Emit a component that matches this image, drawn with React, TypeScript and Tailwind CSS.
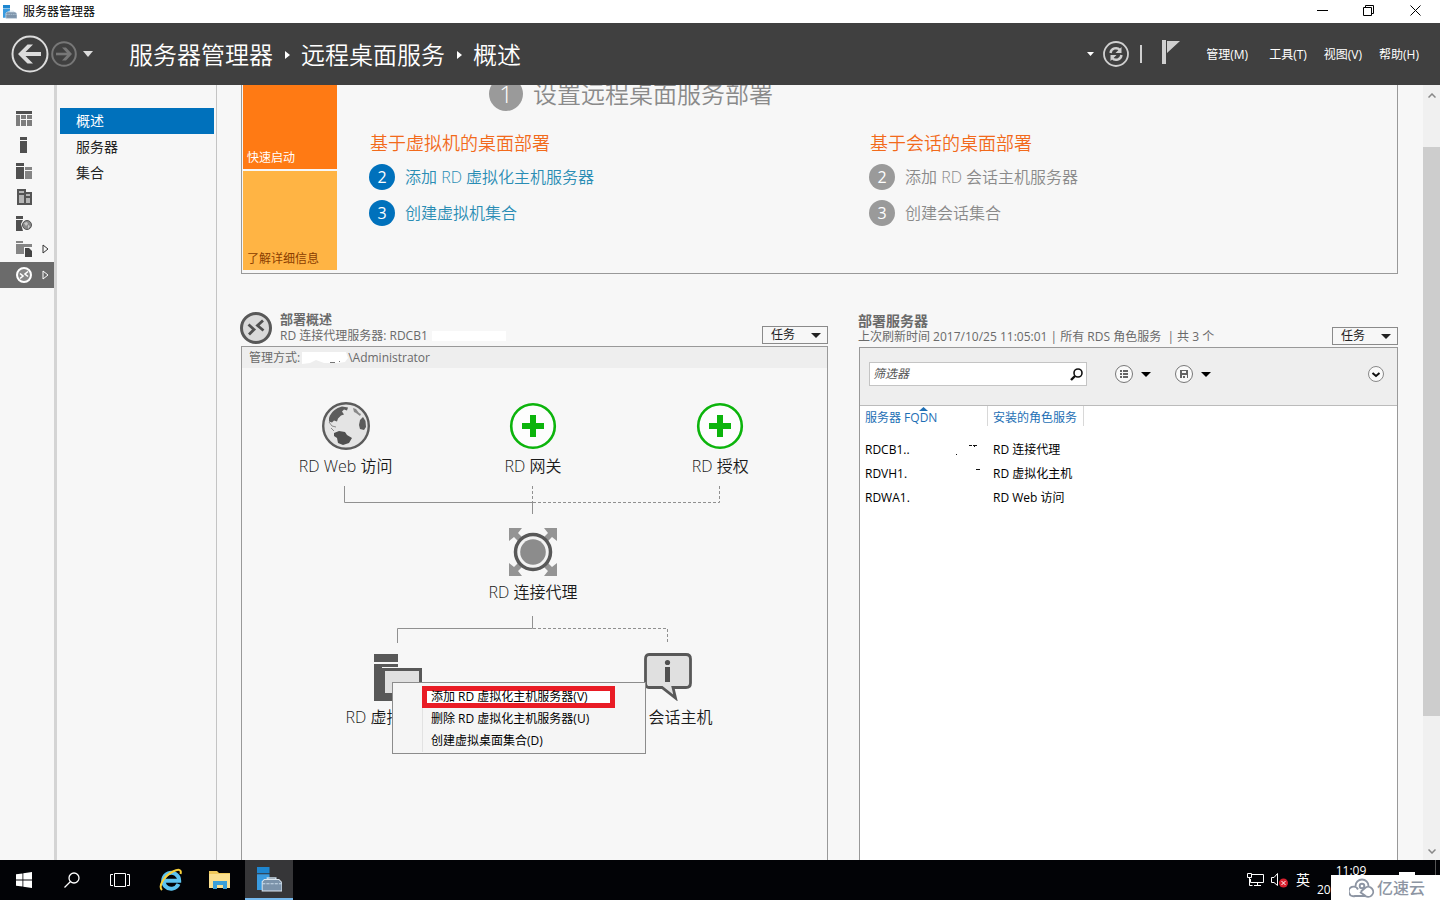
import type { ReactNode } from "react";
import clsx from "clsx";

const NAV = ["概述", "服务器", "集合"];

const MENUS = ["管理(M)", "工具(T)", "视图(V)", "帮助(H)"];

const CONTEXT_ITEMS = ["添加 RD 虚拟化主机服务器(V)", "删除 RD 虚拟化主机服务器(U)", "创建虚拟桌面集合(D)"];

const SERVERS = [
  { fqdn: "RDCB1..", role: "RD 连接代理", marks: "M15 12h1v1h-1zM28 3h3v1h-3zM32 3h4v1h-4zM33 4h1v1h-1z" },
  { fqdn: "RDVH1.", role: "RD 虚拟化主机", marks: "M35 3h4v1h-4z" },
  { fqdn: "RDWA1.", role: "RD Web 访问", marks: "" }
];

function Caret({ className = "h-[5px] w-[10px]" }: { className?: string }) {
  return (
    <svg viewBox="0 0 10 6" preserveAspectRatio="none" className={clsx("shrink-0 fill-current", className)}>
      <path d="M0 0h10L5 6z" />
    </svg>
  );
}

function ServerManagerIcon({ className }: { className?: string }) {
  return (
    <svg viewBox="0 0 24 24" className={className}>
      <path d="M0 0h12v6H0z" fill="#1e86d0" />
      <path d="M0 7h12v4L5 14v8H0z" fill="#3a9be0" />
      <path d="M10 12.500v-2h8v2" fill="none" stroke="#c9dcea" strokeWidth="1.500" />
      <path d="M5 14l2-2h14l3 3v8H5z" fill="#7c93aa" stroke="#dbe6ef" />
      <path d="M5 16h19" stroke="#c9dcea" strokeDasharray="3 1" />
    </svg>
  );
}

function TitleBar() {
  return (
    <div className="flex h-[23px] shrink-0 items-center bg-white pl-[3px] text-black">
      <ServerManagerIcon className="h-[14px] w-[14px]" />
      <span className="ml-[6px] text-[12px] leading-[20px]">服务器管理器</span>
      <div className="mr-px ml-auto flex h-full pb-[2px]">
        <button aria-label="最小化" className="grid w-[46px] place-items-center">
          <svg viewBox="0 0 11 11" className="h-[11px] w-[11px]" stroke="currentColor"><path d="M0 5.500h11" /></svg>
        </button>
        <button aria-label="还原" className="grid w-[46px] place-items-center">
          <svg viewBox="0 0 11 11" className="h-[11px] w-[11px]" fill="none" stroke="currentColor">
            <path d="M.5 2.500h8v8h-8zM2.500 2.500v-2h8v8h-2" />
          </svg>
        </button>
        <button aria-label="关闭" className="grid w-[48px] place-items-center">
          <svg viewBox="0 0 11 11" className="h-[11px] w-[11px]" stroke="currentColor"><path d="M.5.5l10 10M10.500.5l-10 10" /></svg>
        </button>
      </div>
    </div>
  );
}

function Header() {
  return (
    <header className="flex h-[62px] shrink-0 items-center bg-[#404040] pr-[21px] pl-[11px] text-white">
      <button aria-label="后退">
        <svg viewBox="0 0 38 38" className="h-[38px] w-[38px]" fill="none" stroke="#dcdcdc">
          <circle cx="19" cy="19" r="17.500" strokeWidth="2" />
          <path d="M9 19h21" strokeWidth="4" />
          <path d="M22 9.500h-5.500L7 19l9.500 9.500H22L12.500 19z" fill="#dcdcdc" stroke="none" />
        </svg>
      </button>
      <button aria-label="前进" className="ml-[2px]">
        <svg viewBox="0 0 26 26" className="h-[26px] w-[26px]" fill="none" stroke="#777">
          <circle cx="13" cy="13" r="11.800" strokeWidth="2" />
          <path d="M5 13h14" strokeWidth="2.600" />
          <path d="M11 6.500h4L21 13l-6 6.500h-4L17 13z" fill="#777" stroke="none" />
        </svg>
      </button>
      <Caret className="ml-[6px] h-[6px] w-[10px] text-[#dcdcdc]" />
      <h1 className="ml-[36px] flex items-center pt-[2px] text-[24px] leading-[32px] font-[350]">
        服务器管理器
        <svg viewBox="0 0 5 8" className="mr-[11px] ml-[12px] h-[8px] w-[5px] fill-white"><path d="M0 0l5 4-5 4z" /></svg>
        远程桌面服务
        <svg viewBox="0 0 5 8" className="mr-[11px] ml-[12px] h-[8px] w-[5px] fill-white"><path d="M0 0l5 4-5 4z" /></svg>
        概述
      </h1>
      <Caret className="ml-auto h-[4px] w-[7px]" />
      <button aria-label="刷新" className="ml-[9px]">
        <svg viewBox="0 0 26 26" className="h-[26px] w-[26px]" fill="none" stroke="#d0d0d0">
          <circle cx="13" cy="13" r="12" strokeWidth="1.800" />
          <path d="M7.500 12a5.500 5.500 0 0 1 9.500-3M18.500 14a5.500 5.500 0 0 1-9.500 3" strokeWidth="2.400" />
          <path d="M18.500 6v6h-6zM7.500 20v-6h6z" fill="#d0d0d0" stroke="none" />
        </svg>
      </button>
      <span className="ml-[11px] h-[18px] w-[2px] bg-[#cfcfcf]" />
      <button aria-label="通知" className="ml-[20px]">
        <svg viewBox="0 0 18 24" className="mb-[4px] h-[24px] w-[18px] fill-[#d0d0d0]">
          <path d="M0 0h4v24H0zM5 1h13L5 13z" />
        </svg>
      </button>
      <nav className="ml-[26px] flex gap-[17px] pt-[2px] text-[12px] leading-[20px]">
        {MENUS.map((m) => (
          <button key={m} className="first:mr-[4px]">{m}</button>
        ))}
      </nav>
    </header>
  );
}

const RAIL: { label: string; icon: ReactNode; arrow?: boolean }[] = [
  {
    label: "仪表板",
    icon: (
      <>
        <path d="M0 0h16v3H0z" fill="#505050" />
        <path d="M0 4h4v11H0zM5 4h5v4H5zM11 4h5v4h-5zM5 9h5v6H5zM11 9h5v6h-5z" fill="#7d7d7d" />
      </>
    )
  },
  { label: "本地服务器", icon: <path d="M4 0h7v3H4zM4 4h7v12H4z" fill="#505050" /> },
  {
    label: "所有服务器",
    icon: (
      <>
        <path d="M0 0h8v3H0zM0 4h8v12H0z" fill="#505050" />
        <path d="M9 4h7v3H9zM9 8h7v8H9z" fill="#858585" />
      </>
    )
  },
  {
    label: "AD DS",
    icon: (
      <>
        <path d="M1 0h9v3h6v13H1z" fill="#555" />
        <path d="M3 2h5v2H3zM3 6h5v8H3zM10 5h4v2h-4zM10 9h4v5h-4z" fill="#b5b5b5" />
      </>
    )
  },
  {
    label: "DNS",
    icon: (
      <>
        <path d="M0 1h7v3H0zM0 5h7l-2 4 2 7H0z" fill="#505050" />
        <circle cx="11" cy="10" r="4.500" fill="#8a8a8a" stroke="#555" />
        <path d="M8 8l3-1 1 2-2 2zM12 10l2 1-2 3z" fill="#c8c8c8" />
      </>
    )
  },
  {
    label: "文件和存储服务",
    arrow: true,
    icon: (
      <>
        <path d="M0 0h7v2H0zM0 3h16v3H8v7H0z" fill="#858585" />
        <path d="M9 7h4l3 3v6H9z" fill="#444" />
      </>
    )
  },
  {
    label: "远程桌面服务",
    arrow: true,
    icon: (
      <>
        <circle cx="8" cy="8" r="7" fill="#888" stroke="#fff" strokeWidth="2" />
        <path d="M4 6.500l3 2.500-3 2.500M12 4.500L9 7l3 2.500" fill="none" stroke="#fff" strokeWidth="1.600" />
      </>
    )
  }
];

function Rail() {
  return (
    <nav className="w-[57px] shrink-0 border-r-[3px] border-[#d4d4d4] pt-[21px]">
      {RAIL.map((r, i) => {
        const active = i === RAIL.length - 1;
        return (
          <button
            key={r.label}
            aria-label={r.label}
            className={clsx("flex h-[26px] w-full items-center pl-[16px]", active ? "bg-[#6b6b6b] text-white" : "text-[#333]")}
          >
            <svg viewBox="0 0 16 16" className="h-[16px] w-[16px]">{r.icon}</svg>
            {r.arrow && (
              <svg viewBox="0 0 7 10" className="ml-[10px] h-[10px] w-[7px]" fill="none" stroke="currentColor">
                <path d="M1 1l5 4-5 4z" />
              </svg>
            )}
          </button>
        );
      })}
    </nav>
  );
}

function SideNav() {
  return (
    <nav className="w-[160px] shrink-0 border-r border-[#c4c4c4] pt-[23px] pr-[2px] pl-[3px]">
      {NAV.map((n, i) => (
        <a
          key={n}
          href="#"
          className={clsx("block h-[26px] pl-[16px] text-[14px] leading-[26px]", i === 0 ? "bg-[#0071bc] text-white" : "text-[#222]")}
        >
          {n}
        </a>
      ))}
    </nav>
  );
}

function Steps({ title, steps, muted }: { title: string; steps: string[]; muted?: boolean }) {
  return (
    <section>
      <h3 className="pl-px text-[18px] leading-[24px] font-[350] text-[#f26a1b]">{title}</h3>
      <ol className="mt-[9px] space-y-[10px]">
        {steps.map((s, i) => (
          <li key={s} className="flex items-center gap-[10px]">
            <span
              className={clsx(
                "grid h-[26px] w-[26px] place-items-center rounded-full text-[16px] leading-[24px] text-white",
                muted ? "bg-[#9a9a9a]" : "bg-[#0071bc]"
              )}
            >
              {i + 2}
            </span>
            <a href="#" className={clsx("text-[16px] leading-[24px] font-[350]", muted ? "text-[#8a8a8a]" : "text-[#2a8db4]")}>
              {s}
            </a>
          </li>
        ))}
      </ol>
    </section>
  );
}

function QuickStart() {
  return (
    <section className="-mt-[24px] flex shrink-0 border-x border-b border-[#999] pb-[3px] pl-px">
      <div className="flex w-[94px] shrink-0 flex-col gap-[2px] text-[12px] leading-[20px]">
        <button className="flex h-[108px] items-end bg-[#ff7a14] pb-px pl-[4px] text-white">快速启动</button>
        <button className="flex h-[99px] items-end bg-[#ffb444] pb-px pl-[4px] text-[#8a3d00]">了解详细信息</button>
      </div>
      <div className="flex-1 pt-[16px]">
        <h2 className="flex items-center gap-[10px] pl-[152px] text-[24px] leading-[34px] font-[350] text-[#8a8a8a]">
          <span className="grid h-[34px] w-[34px] place-items-center rounded-full bg-[#9a9a9a] text-white">1</span>
          设置远程桌面服务部署
        </h2>
        <div className="mt-[20px] grid grid-cols-2 pr-[28px] pl-[32px]">
          <Steps title="基于虚拟机的桌面部署" steps={["添加 RD 虚拟化主机服务器", "创建虚拟机集合"]} />
          <Steps title="基于会话的桌面部署" steps={["添加 RD 会话主机服务器", "创建会话集合"]} muted />
        </div>
      </div>
    </section>
  );
}

function TaskButton() {
  return (
    <button className="flex h-[18px] w-[66px] items-center justify-between border border-[#8a8a8a] pr-[6px] pl-[8px] text-[12px] leading-[16px] text-[#222]">
      任务
      <Caret />
    </button>
  );
}

function Node({ label, children }: { label: string; children: ReactNode }) {
  return (
    <div className="flex flex-col items-center">
      <svg viewBox="0 0 48 48" className="h-[48px] w-[48px]">{children}</svg>
      <span className="mt-[4px] text-[16px] leading-[24px] font-[350] whitespace-nowrap text-[#1a1a1a]">{label}</span>
    </div>
  );
}

function PlusMark() {
  return (
    <>
      <circle cx="24" cy="24" r="21.800" fill="#fdfdfd" stroke="#0cb40c" strokeWidth="2.600" />
      <path d="M21 13h6v8h8v6h-8v8h-6v-8h-8v-6h8z" fill="#0cb40c" />
    </>
  );
}

function ContextMenu() {
  return (
    <ul
      role="menu"
      className="absolute top-[29px] left-[129px] z-10 w-[254px] border border-[#8c8c8c] bg-[#f5f5f5] pt-[3px] pb-px pl-[29px] text-[12px] leading-[20px] text-black"
    >
      {CONTEXT_ITEMS.map((item, i) => (
        <li key={item} role="none" className={clsx("h-[22px] border-l", i === 0 ? "border-transparent" : "border-[#e2e2e2]")}>
          <button role="menuitem" className="relative block h-full w-full pl-[8px] text-left">
            {i === 0 && <span className="absolute top-0 -left-px h-[22px] w-[193px] border-[5px] border-[#e91c25] bg-white" />}
            <span className="relative">{item}</span>
          </button>
        </li>
      ))}
    </ul>
  );
}

function Deployment() {
  return (
    <section className="flex min-h-0 flex-col">
      <header className="flex h-[34px] shrink-0 items-end">
        <svg viewBox="0 0 32 32" className="-ml-px mb-[2px] h-[32px] w-[32px]">
          <circle cx="16" cy="16" r="14.500" fill="#d9d9d9" stroke="#585858" strokeWidth="3" />
          <path d="M8.500 12.500l5.500 5-5 5M23 8.500l-5.500 5 6 5" fill="none" stroke="#505050" strokeWidth="2.800" />
        </svg>
        <div className="mb-[2px] ml-[8px] text-[#6a6a6a]">
          <h2 className="text-[13px] leading-[15px] font-bold">部署概述</h2>
          <p className="flex items-center text-[12px] leading-[17px]">
            RD 连接代理服务器: RDCB1
            <span className="ml-[4px] h-[10px] w-[74px] bg-white" />
          </p>
        </div>
        <div className="mb-[2px] ml-auto"><TaskButton /></div>
      </header>
      <div className="flex-1 overflow-hidden border-x border-t border-[#999]">
        <p className="flex h-[21px] items-center bg-[#eee] pl-[7px] text-[12px] leading-[20px] text-[#6a6a6a]">
          管理方式:
          <svg viewBox="0 0 48 14" className="h-[14px] w-[48px]">
            <path d="M2 1h44l2 6-3 4-7 1H24l-8-3-6 3-8 1z" fill="#fff" />
            <path d="M30 11h5v1h-5zM39 10h1v1h-1z" fill="#777" />
          </svg>
          \Administrator
        </p>
        <div className="mt-[34px] pr-[13px] pl-[10px]">
          <div className="mx-auto w-[562px]">
            <div className="grid grid-cols-3">
              <Node label="RD Web 访问">
                <circle cx="24" cy="24" r="22.800" fill="#e4e4e4" stroke="#5c5c5c" strokeWidth="2.400" />
                <path d="M7 16C9 10 14 6 20 4.500l6 1-1 3-3-1-2 2 2 3-3 1-3 3-1 3-3-1-2 2-3-1z" fill="#5c5c5c" />
                <path d="M7 20l3 4 4 1M9 26l3 3" fill="none" stroke="#8a8a8a" />
                <path d="M12 31l5-2 6 1 2 3 5 3-3 5-6 2-5-2-1-5-3-2z" fill="#4f4f4f" />
                <path d="M38 18l3-3 2.500 4 .5 6-2 3-4-1-1-4z" fill="#5c5c5c" />
                <path d="M31 6l3 1 3 4 2 1-1 2-4-3-2-1z" fill="#888" />
              </Node>
              <Node label="RD 网关"><PlusMark /></Node>
              <Node label="RD 授权"><PlusMark /></Node>
            </div>
            <svg viewBox="0 0 562 28" className="mt-[8px] h-[28px] w-full" fill="none" stroke="#909090">
              <path d="M92.500 0v16.500h188M280.500 16v12" />
              <path d="M280.500 0v16M281 16.500h186.500V0" strokeDasharray="3 2" />
            </svg>
            <div className="mt-[14px]">
              <Node label="RD 连接代理">
                <path d="M0 0h13l-4 5 6 6-4 4-6-6-5 4zM48 0H35l4 5-6 6 4 4 6-6 5 4zM0 48h13l-4-5 6-6-4-4-6 6-5-4zM48 48H35l4-5-6-6 4-4 6 6 5-4z" fill="#949494" />
                <circle cx="24" cy="24" r="17.500" fill="#f2f2f2" stroke="#585858" strokeWidth="3.500" />
                <circle cx="24" cy="24" r="12.800" fill="#8c8c8c" />
              </Node>
            </div>
            <svg viewBox="0 0 562 27" className="mt-[12px] h-[27px] w-full" fill="none" stroke="#909090">
              <path d="M280.500 0v12.500h-135V27" />
              <path d="M281 12.500h134.500V27" strokeDasharray="3 2" />
            </svg>
            <div className="relative mx-auto mt-[10px] grid w-[540px] grid-cols-2">
              <Node label="RD 虚拟化主机">
                <path d="M0 1h24v8H0zM0 11h24v3H8v27h16v7H0z" fill="#585858" />
                <path d="M9.500 16.500h37v25h-37z" fill="#e0e0e0" stroke="#585858" strokeWidth="3" />
              </Node>
              <Node label="RD 会话主机">
                <path d="M5 1.500h37q4.500 0 4.500 4.500v24q0 4.500-4.500 4.500H29L31.500 45 18 34.500H5Q1.500 34.500 1.500 30V6q0-4.500 3.500-4.500z" fill="#e0e0e0" stroke="#585858" strokeWidth="2.800" />
                <circle cx="23.500" cy="9.500" r="2.600" fill="#505050" />
                <path d="M21 14h5v15h-5z" fill="#505050" />
              </Node>
              <ContextMenu />
            </div>
          </div>
        </div>
      </div>
    </section>
  );
}

function Servers() {
  return (
    <section className="flex min-h-0 flex-col">
      <header className="flex h-[35px] shrink-0 items-end">
        <div className="-ml-px mb-[2px] text-[#6a6a6a]">
          <h2 className="text-[14px] leading-[15px] font-bold">部署服务器</h2>
          <p className="text-[12px] leading-[17px] whitespace-pre">上次刷新时间 2017/10/25 11:05:01 | 所有 RDS 角色服务  | 共 3 个</p>
        </div>
        <div className="mb-[2px] ml-auto"><TaskButton /></div>
      </header>
      <div className="flex-1 overflow-hidden border-x border-t border-[#999] bg-white">
        <div className="flex h-[58px] items-center border-b border-[#bbb] bg-[#eee] pr-[13px] pb-[5px] pl-[9px]">
          <label className="flex h-[24px] w-[218px] items-center border border-[#c4c4c4] bg-white pr-[3px] pl-[3px]">
            <input
              aria-label="筛选器"
              placeholder="筛选器"
              className="min-w-0 flex-1 text-[12px] leading-[20px] text-[#333] italic outline-none placeholder:text-[#555]"
            />
            <svg viewBox="0 0 13 13" className="h-[13px] w-[13px]" fill="none" stroke="#111">
              <circle cx="8" cy="5" r="4" strokeWidth="1.600" />
              <path d="M5 8l-4 4" strokeWidth="2.400" />
            </svg>
          </label>
          <button aria-label="查看方式" className="ml-[28px] flex items-center gap-[8px]">
            <svg viewBox="0 0 18 18" className="h-[18px] w-[18px]">
              <circle cx="9" cy="9" r="8.500" fill="#fafafa" stroke="#777" />
              <path d="M5 5h2v2H5zM5 8h2v2H5zM5 11h2v2H5zM8 5h5v2H8zM8 8h5v2H8zM8 11h5v2H8z" fill="#666" />
            </svg>
            <Caret />
          </button>
          <button aria-label="保存查询" className="ml-[24px] flex items-center gap-[8px]">
            <svg viewBox="0 0 18 18" className="h-[18px] w-[18px]">
              <circle cx="9" cy="9" r="8.500" fill="#fafafa" stroke="#777" />
              <path d="M5 5h8v8h-1v-3H7v3H5zM7 6v2h4V6z" fill="#666" fillRule="evenodd" />
              <path d="M8 11h2v2H8z" fill="#666" />
            </svg>
            <Caret />
          </button>
          <button aria-label="展开" className="ml-auto">
            <svg viewBox="0 0 16 16" className="h-[16px] w-[16px]" fill="#fafafa">
              <circle cx="8" cy="8" r="7.500" stroke="#888" />
              <path d="M4.500 7L8 10l3.500-3" fill="none" stroke="#111" strokeWidth="2" />
            </svg>
          </button>
        </div>
        <table className="w-full table-fixed text-left text-[12px] leading-[20px] text-black">
          <thead>
            <tr className="h-[32px] align-top text-[#1e6fb5]">
              <th className="w-[128px] font-normal">
                <div className="relative h-[20px] border-r border-[#d8d8d8] pl-[5px] leading-[24px]">
                  服务器 FQDN
                  <Caret className="absolute top-px left-[59px] h-[4px] w-[9px] rotate-180" />
                </div>
              </th>
              <th className="w-[96px] font-normal">
                <div className="h-[20px] border-r border-[#d8d8d8] pl-[5px] leading-[24px]">安装的角色服务</div>
              </th>
              <th />
            </tr>
          </thead>
          <tbody>
            {SERVERS.map((s) => (
              <tr key={s.fqdn} className="h-[24px]">
                <td className="pl-[5px]">
                  <div className="flex items-center justify-between pr-[7px]">
                    {s.fqdn}
                    <svg viewBox="0 0 40 16" className="h-[16px] w-[40px]"><path d={s.marks} fill="#111" /></svg>
                  </div>
                </td>
                <td className="pl-[5px] whitespace-nowrap">{s.role}</td>
                <td />
              </tr>
            ))}
          </tbody>
        </table>
      </div>
    </section>
  );
}

function ScrollBar() {
  return (
    <div className="flex w-[17px] shrink-0 flex-col bg-[#f0f0f0]">
      <button aria-label="向上滚动" className="grid h-[20px] shrink-0 place-items-center">
        <svg viewBox="0 0 8 5" className="h-[5px] w-[8px]" fill="none" stroke="#888" strokeWidth="1.500"><path d="M.5 4.500L4 1l3.500 3.500" /></svg>
      </button>
      <div className="flex-1 pt-[42px]">
        <div className="h-[569px] bg-[#cdcdcd]" />
      </div>
      <button aria-label="向下滚动" className="grid h-[17px] shrink-0 place-items-center">
        <svg viewBox="0 0 8 5" className="h-[5px] w-[8px]" fill="none" stroke="#888" strokeWidth="1.500"><path d="M.5.5L4 4 7.500.5" /></svg>
      </button>
    </div>
  );
}

function TaskBar() {
  return (
    <footer className="relative flex h-[40px] shrink-0 bg-[#020306] text-white">
      <button aria-label="开始" className="grid w-[48px] place-items-center">
        <svg viewBox="0 0 16 16" className="h-[16px] w-[16px] fill-white">
          <path d="M0 2.300l6.500-.9v6.200H0zM7.300 1.200L16 0v7.600H7.300zM0 8.400h6.500v6.200L0 13.700zM7.300 8.400H16V16l-8.700-1.200z" />
        </svg>
      </button>
      <button aria-label="搜索" className="grid w-[48px] place-items-center">
        <svg viewBox="0 0 16 16" className="h-[16px] w-[16px]" fill="none" stroke="#fff" strokeWidth="1.300">
          <circle cx="10" cy="6" r="5" />
          <path d="M6.500 9.500L.5 15.500" />
        </svg>
      </button>
      <button aria-label="任务视图" className="grid w-[48px] place-items-center">
        <svg viewBox="0 0 20 14" className="h-[14px] w-[20px]" fill="none" stroke="#fff">
          <path d="M4.500.5h11v13h-11zM3 1.500H.5v11H3M17 1.500h2.500v11H17" />
        </svg>
      </button>
      <button aria-label="Internet Explorer" className="ml-[3px] grid w-[48px] place-items-center">
        <svg viewBox="0 0 24 24" className="h-[24px] w-[24px]" fill="none">
          <path d="M19.500 16a8 8 0 1 1 .7-3.200H6" stroke="#5cc4f0" strokeWidth="4" />
          <path d="M3 22C-1 18 5 8 14 3.500 19 1 23 1 21.500 6" stroke="#f7cf3a" strokeWidth="2" />
        </svg>
      </button>
      <button aria-label="文件资源管理器" className="ml-px grid w-[48px] place-items-center">
        <svg viewBox="0 0 22 20" className="h-[20px] w-[22px]">
          <path d="M0 1h8l2 2h11v15H0z" fill="#f0c95a" />
          <path d="M0 4h21v14H0z" fill="#fbe08f" />
          <path d="M4 11h14v8h-4v-4H8v4H4z" fill="#3a9fd8" />
        </svg>
      </button>
      <button aria-label="服务器管理器" className="ml-px grid w-[48px] place-items-center border-b-2 border-[#76b9ed] bg-[#363638]">
        <ServerManagerIcon className="h-[25px] w-[25px]" />
      </button>
      <div className="ml-auto flex items-center pr-[55px]">
        <svg viewBox="0 0 17 14" className="h-[14px] w-[17px]" fill="none" stroke="#fff">
          <path d="M5 1.500h11.500v8H3.500V6M10.500 9.500v3M7 12.500h7M.5.5h4v4h-4zM2.500 4.500v8h3" />
        </svg>
        <svg viewBox="0 0 18 16" className="ml-[7px] h-[16px] w-[18px]" fill="none" stroke="#fff">
          <path d="M.5 5.500H3l3.500-4v12L3 10.500H.5z" />
          <circle cx="12.500" cy="11" r="4.500" fill="#d9202e" stroke="none" />
          <path d="M10.500 9l4 4M14.500 9l-4 4" />
        </svg>
        <span className="ml-[7px] text-[14px] leading-[20px]">英</span>
        <div className="ml-[7px] w-[68px] text-[12px] leading-[19px]">
          <div className="text-center">11:09</div>
          <div>20</div>
        </div>
      </div>
      <div className="absolute top-0 right-[4px] h-[16px] w-px bg-[#555]" />
      <div className="absolute right-[25px] bottom-[25px] h-[3px] w-[16px] bg-white" />
      <div className="absolute right-0 bottom-0 flex h-[25px] w-[109px] items-center gap-[2px] bg-white pl-[18px] text-[#8d95a3]">
        <svg viewBox="0 0 26 20" className="h-[20px] w-[26px]" fill="none" stroke="currentColor" strokeWidth="1.900">
          <path d="M6.500 8a6.500 6.500 0 0 1 13 0" />
          <path d="M9 11.500A4.800 4.800 0 1 0 6 18h10" />
          <path d="M11 14l4.500 3.200A5 5 0 1 0 16 10l-4 3.500" />
          <circle cx="13" cy="8" r="2.300" />
        </svg>
        <span className="text-[16px] leading-[24px] font-medium">亿速云</span>
      </div>
    </footer>
  );
}

export default function App() {
  return (
    <div className="flex h-screen flex-col overflow-hidden bg-[#f7f7f7] font-['Open_Sans','Noto_Sans_CJK_SC',sans-serif]">
      <TitleBar />
      <Header />
      <div className="flex min-h-0 flex-1">
        <Rail />
        <SideNav />
        <main className="flex min-w-0 flex-1 flex-col overflow-hidden pr-[25px] pl-[24px]">
          <QuickStart />
          <div className="mt-[38px] grid min-h-0 flex-1 grid-cols-[587fr_539fr] gap-[31px]">
            <Deployment />
            <Servers />
          </div>
        </main>
        <ScrollBar />
      </div>
      <TaskBar />
    </div>
  );
}
